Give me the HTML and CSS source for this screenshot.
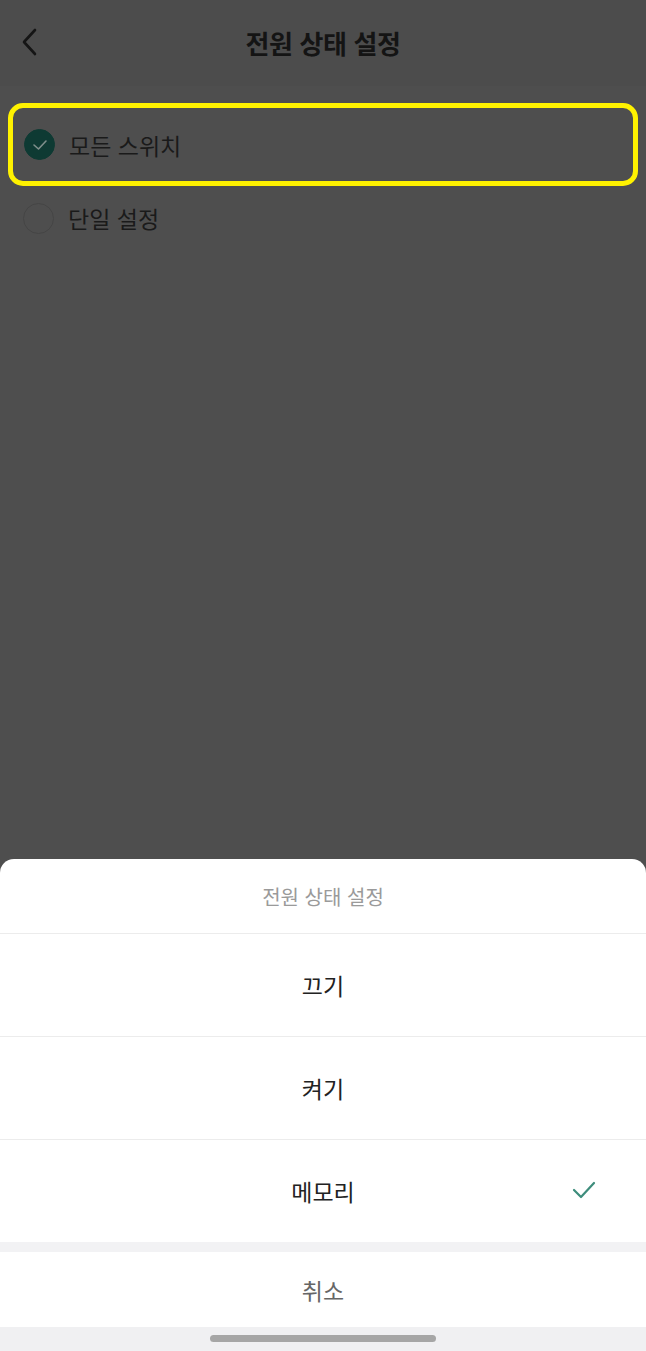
FILE: index.html
```html
<!DOCTYPE html>
<html lang="ko">
<head>
  <meta charset="UTF-8" />
  <meta name="viewport" content="width=device-width, initial-scale=1.0" />
  <title>전원 상태 설정</title>
  <link rel="stylesheet" href="styles.css">
</head>
<body>
  <div class="page">
    <header class="topbar">
      <svg class="back" width="20" height="30" viewBox="0 0 20 30"><path d="M15 3 L4 15 L15 27" fill="none" stroke="#151515" stroke-width="2.6" stroke-linecap="round" stroke-linejoin="round"/></svg>
      <h1>전원 상태 설정</h1>
    </header>

    <div class="options">
      <div class="opt highlight">
        <span class="radio on">
          <svg width="16" height="12" viewBox="0 0 16 12"><path d="M2 6 L6.5 10 L14 2" fill="none" stroke="#7f8f8b" stroke-width="1.6" stroke-linecap="round" stroke-linejoin="round"/></svg>
        </span>
        <span class="label">모든 스위치</span>
      </div>
      <div class="opt">
        <span class="radio"></span>
        <span class="label">단일 설정</span>
      </div>
    </div>
  </div>

  <div class="sheet">
    <div class="sheet-title">전원 상태 설정</div>
    <div class="item">끄기</div>
    <div class="item">켜기</div>
    <div class="item selected">메모리
      <svg class="tick" width="24" height="20" viewBox="0 0 24 20"><path d="M2 10 L9 17 L22 3" fill="none" stroke="#3e8d7c" stroke-width="2.2" stroke-linecap="round" stroke-linejoin="round"/></svg>
    </div>
    <div class="cancel">취소</div>
    <div class="home-bar"><span></span></div>
  </div>
</body>
</html>
```

FILE: styles.css
```css
* { box-sizing: border-box; }
html, body { margin: 0; height: 100%; }
body { font-family: "Noto Sans CJK KR", "Noto Sans", sans-serif; background: #4e4e4e; width: 646px; height: 1351px; overflow: hidden; display: flex; flex-direction: column; }
.page { flex: 1; }
.topbar { height: 86px; display: flex; align-items: center; justify-content: center; position: relative; background: #4c4c4c; }
.topbar h1 { margin: 0 0 2px 0; font-size: 26px; font-weight: 700; color: #141414; letter-spacing: -0.4px; }
.back { position: absolute; left: 20px; top: 27px; }
.options { padding: 17px 12px 0 12px; }
.opt { display: flex; align-items: center; height: 64px; padding-left: 11px; gap: 14px; }
.opt.highlight { height: 83px; margin: 0 -4px; padding-left: 11px; border: 5px solid #fff200; border-radius: 15px; }
.radio { width: 31px; height: 31px; border-radius: 50%; border: 1.5px solid #454545; display: flex; align-items: center; justify-content: center; }
.radio.on { background: #0e3a33; border-color: #0e3a33; }
.label { font-size: 23px; color: #1a1a1a; }
.sheet { background: #fff; border-radius: 14px 14px 0 0; display: flex; flex-direction: column; }
.sheet-title { height: 75px; border-bottom: 1px solid #ececec; display: flex; align-items: center; justify-content: center; font-size: 20px; color: #9a9a9a; }
.item { height: 103px; border-bottom: 1px solid #ececec; display: flex; align-items: center; justify-content: center; font-size: 23px; color: #222; position: relative; }
.item.selected { border-bottom: 10px solid #f2f2f4; height: 112px; }
.tick { position: absolute; right: 50px; top: 40px; }
.cancel { height: 75px; display: flex; align-items: center; justify-content: center; font-size: 23px; color: #666; }
.home-bar { height: 24px; background: #f0f0f2; display: flex; justify-content: center; padding-top: 8px; }
.home-bar span { width: 226px; height: 7px; border-radius: 4px; background: #a6a6a6; }
```
